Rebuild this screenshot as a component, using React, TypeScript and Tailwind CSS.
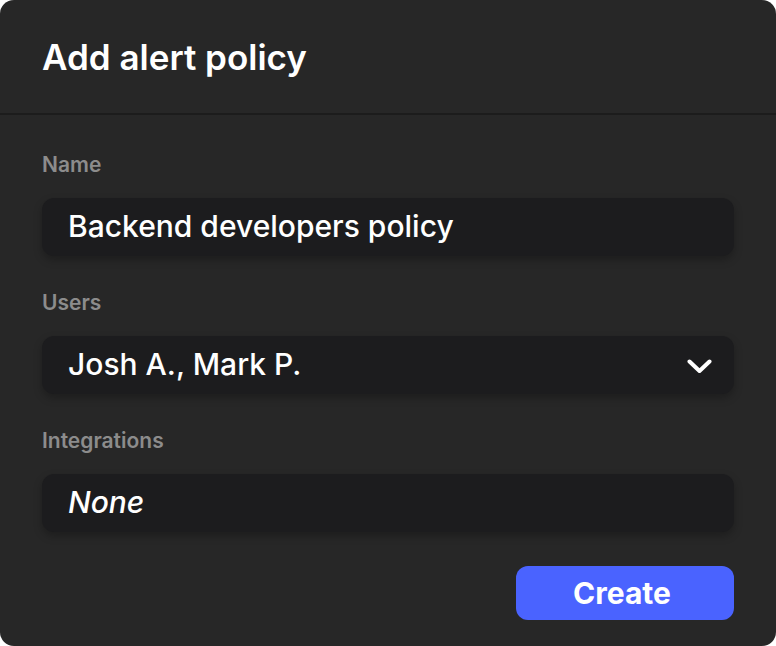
type Field = { label: string; value: string; italic?: boolean; select?: boolean };

const FIELDS: Field[] = [
  { label: "Name", value: "Backend developers policy" },
  { label: "Users", value: "Josh A., Mark P.", select: true },
  { label: "Integrations", value: "None", italic: true },
];

export default function App() {
  return (
    <div className="w-[776px] h-[646px] bg-white" style={{ fontFamily: "Inter, 'Noto Sans', sans-serif" }}>
      <div className="w-full h-full bg-[#272727] rounded-[14px] overflow-hidden flex flex-col">
        <div className="h-[115px] flex items-center px-[42px] border-b-2 border-[#1c1c1c]">
          <h1 className="text-[35px] font-semibold text-white leading-none mt-[2px]">Add alert policy</h1>
        </div>

        <div className="px-[42px] pt-[38px] flex flex-col">
          {FIELDS.map((f, i) => (
            <div key={f.label} className={i > 0 ? "mt-[35px]" : ""}>
              <label className="block text-[21px] leading-6 font-semibold text-[#8c8c8c]">{f.label}</label>
              <div className="mt-[21px] h-[58px] rounded-[12px] bg-[#1c1c1e] shadow-[0_4px_8px_rgba(0,0,0,0.25)] flex items-center justify-between pl-[26px] pr-[22px]">
                <span className={`text-[30px] font-medium text-white leading-none -mt-[2px] ${f.italic ? "italic" : ""}`}>
                  {f.value}
                </span>
                {f.select && (
                  <svg width="25" height="15" viewBox="0 0 25 15" fill="none" className="mt-[2px]">
                    <path d="M2.5 2.5 L12.5 12 L22.5 2.5" stroke="white" strokeWidth="4" strokeLinecap="round" strokeLinejoin="round" />
                  </svg>
                )}
              </div>
            </div>
          ))}

          <div className="mt-[34px] flex justify-end">
            <button className="w-[218px] h-[54px] pr-[6px] rounded-[12px] bg-[#4a63ff] text-white text-[30px] font-bold leading-none">
              Create
            </button>
          </div>
        </div>
      </div>
    </div>
  );
}
